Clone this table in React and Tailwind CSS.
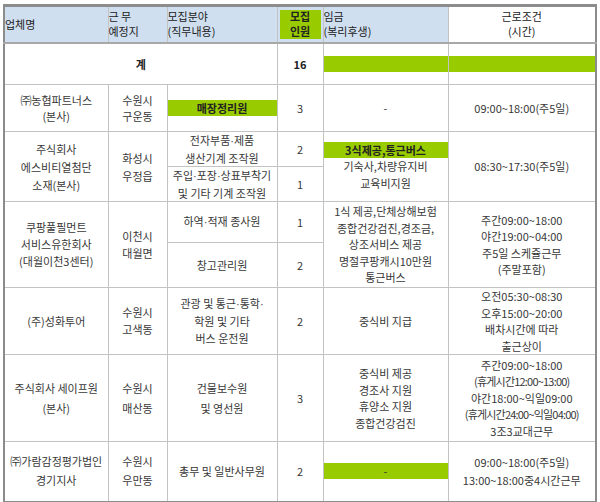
import React from "react";

const cell = "border border-[#c3c3c3] text-center align-middle p-0";
const hd = "border border-[#c3c3c3] border-t-[3px] border-t-[#8c8c8c] border-b-2 border-b-[#a8a8a8] align-middle p-0 font-normal";

function T({ s }) {
  const parts = s.split("·");
  return (
    <>
      {parts.map((p, i) => (
        <React.Fragment key={i}>
          {p}
          {i < parts.length - 1 && (
            <span style={{ fontFamily: '"Liberation Sans", sans-serif' }}>·</span>
          )}
        </React.Fragment>
      ))}
    </>
  );
}

function Lines({ items, className = "" }) {
  return (
    <div className={className}>
      {items.map((t, i) => (
        <div key={i}>
          <T s={t} />
        </div>
      ))}
    </div>
  );
}

export default function App() {
  return (
    <div className="w-[600px] h-[502px] bg-white pl-[3px] pt-[4px]">
      <table
        className="table-fixed border-collapse border-2 border-[#8c8c8c] text-[11px] leading-[16.5px] text-[#383838]"
        style={{ fontFamily: '"Noto Sans CJK KR", "Noto Sans", sans-serif', width: 592 }}
      >
        <colgroup>
          <col style={{ width: 104 }} />
          <col style={{ width: 59 }} />
          <col style={{ width: 110 }} />
          <col style={{ width: 46 }} />
          <col style={{ width: 125 }} />
          <col style={{ width: 148 }} />
        </colgroup>
        <tbody>
          <tr className="h-[37px] bg-[#d0dff0] text-[#222]">
            <th className={hd + " text-left"}>업체명</th>
            <th className={hd + " text-left leading-[15px]"}>
              <div>근 무</div>
              <div>예정지</div>
            </th>
            <th className={hd + " text-left leading-[15px]"}>
              <div>모집분야</div>
              <div>(직무내용)</div>
            </th>
            <th className={hd + " p-[2px]"}>
              <div className="bg-[#99cc00] h-[29px] flex items-center justify-center font-bold leading-[15px] text-[#222]">
                <span>모집<br />인원</span>
              </div>
            </th>
            <th className={hd + " text-left leading-[15px]"}>
              <div>임금</div>
              <div>(복리후생)</div>
            </th>
            <th className={hd + " bg-white font-bold leading-[15px] text-center"}>
              <div>근로조건</div>
              <div>(시간)</div>
            </th>
          </tr>
          <tr className="h-[42px]">
            <td colSpan={3} className={cell + " font-bold text-[#222]"}>계</td>
            <td className={cell + " font-bold text-[#222]"}>16</td>
            <td className={cell}>
              <div className="bg-[#99cc00] h-[16px]" />
            </td>
            <td className={cell}>
              <div className="bg-[#99cc00] h-[16px]" />
            </td>
          </tr>
          <tr className="h-[47px]">
            <td className={cell}>
              <Lines items={["㈜농협파트너스", "(본사)"]} />
            </td>
            <td className={cell}>
              <Lines items={["수원시", "구운동"]} />
            </td>
            <td className={cell}>
              <div className="bg-[#99cc00] h-[16px] font-bold text-[#222] leading-[16px]">매장정리원</div>
            </td>
            <td className={cell}>3</td>
            <td className={cell}>-</td>
            <td className={cell}>09:00~18:00(주5일)</td>
          </tr>
          <tr className="h-[35px]">
            <td rowSpan={2} className={cell}>
              <Lines items={["주식회사", "에스비티열첨단", "소재(본사)"]} className="leading-[18px]" />
            </td>
            <td rowSpan={2} className={cell}>
              <Lines items={["화성시", "우정읍"]} className="leading-[18px]" />
            </td>
            <td className={cell}>
              <Lines items={["전자부품·제품", "생산기계 조작원"]} />
            </td>
            <td className={cell}>2</td>
            <td rowSpan={2} className={cell}>
              <div className="bg-[#99cc00] h-[16px] font-bold text-[#222] leading-[16px]">3식제공,통근버스</div>
              <Lines items={["기숙사,차량유지비", "교육비지원"]} />
            </td>
            <td rowSpan={2} className={cell}>08:30~17:30(주5일)</td>
          </tr>
          <tr className="h-[35px]">
            <td className={cell}>
              <Lines items={["주입·포장·상표부착기", "및 기타 기계 조작원"]} />
            </td>
            <td className={cell}>1</td>
          </tr>
          <tr className="h-[41px]">
            <td rowSpan={2} className={cell}>
              <Lines items={["쿠팡풀필먼트", "서비스유한회사", "(대월이천3센터)"]} className="leading-[17px]" />
            </td>
            <td rowSpan={2} className={cell}>
              <Lines items={["이천시", "대월면"]} className="leading-[17px]" />
            </td>
            <td className={cell}>
              <T s="하역·적재 종사원" />
            </td>
            <td className={cell}>1</td>
            <td rowSpan={2} className={cell}>
              <Lines items={["1식 제공,단체상해보험", "종합건강검진,경조금,", "상조서비스 제공", "명절쿠팡캐시10만원", "통근버스"]} />
            </td>
            <td rowSpan={2} className={cell}>
              <Lines items={["주간09:00~18:00", "야간19:00~04:00", "주5일 스케쥴근무", "(주말포함)"]} />
            </td>
          </tr>
          <tr className="h-[45px]">
            <td className={cell}>창고관리원</td>
            <td className={cell}>2</td>
          </tr>
          <tr className="h-[67px]">
            <td className={cell}>(주)성화투어</td>
            <td className={cell}>
              <Lines items={["수원시", "고색동"]} className="leading-[17px]" />
            </td>
            <td className={cell}>
              <Lines items={["관광 및 통근·통학·", "학원 및 기타", "버스 운전원"]} className="leading-[17px]" />
            </td>
            <td className={cell}>2</td>
            <td className={cell}>중식비 지급</td>
            <td className={cell}>
              <Lines items={["오전05:30~08:30", "오후15:00~20:00", "배차시간에 따라", "출근상이"]} />
            </td>
          </tr>
          <tr className="h-[87px]">
            <td className={cell}>
              <Lines items={["주식회사 세이프원", "(본사)"]} className="leading-[20px]" />
            </td>
            <td className={cell}>
              <Lines items={["수원시", "매산동"]} className="leading-[20px]" />
            </td>
            <td className={cell}>
              <Lines items={["건물보수원", "및 영선원"]} className="leading-[20px]" />
            </td>
            <td className={cell}>3</td>
            <td className={cell}>
              <Lines items={["중식비 제공", "경조사 지원", "휴양소 지원", "종합건강검진"]} />
            </td>
            <td className={cell}>
              <div>주간09:00~18:00</div>
              <div className="tracking-[-0.8px]">(휴게시간12:00~13:00)</div>
              <div>야간18:00~익일09:00</div>
              <div className="tracking-[-0.8px]">(휴게시간24:00~익일04:00)</div>
              <div>3조3교대근무</div>
            </td>
          </tr>
          <tr className="h-[60px]">
            <td className={cell}>
              <Lines items={["㈜가람감정평가법인", "경기지사"]} className="leading-[19px]" />
            </td>
            <td className={cell}>
              <Lines items={["수원시", "우만동"]} className="leading-[19px]" />
            </td>
            <td className={cell}>총무 및 일반사무원</td>
            <td className={cell}>2</td>
            <td className={cell}>
              <div className="bg-[#99cc00] h-[16px] leading-[16px]">-</div>
            </td>
            <td className={cell}>
              <Lines items={["09:00~18:00(주5일)", "13:00~18:00중4시간근무"]} className="leading-[18px]" />
            </td>
          </tr>
        </tbody>
      </table>
    </div>
  );
}
